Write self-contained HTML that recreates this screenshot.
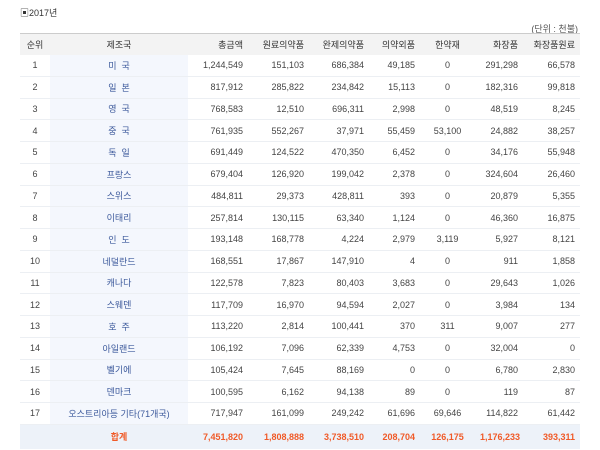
<!DOCTYPE html>
<html><head><meta charset="utf-8"><style>
body{margin:0;background:#fff;font-family:"Liberation Sans","Noto Sans CJK KR",sans-serif;font-size:9px;color:#444;}
.t{position:absolute;left:20px;top:6px;font-size:9px;color:#333}
.u{position:absolute;right:22px;top:22px;font-size:9px;color:#555}
table{position:absolute;left:20px;top:33px;width:560px;border-collapse:collapse;table-layout:fixed}
th{background:#f3f3f3;height:21px;font-weight:normal;color:#333;border-top:1px solid #ccc;text-align:right;padding:0 5px}
td{height:20.75px;text-align:right;padding:0 5px;border-bottom:1px solid #eceff3}
th:nth-child(1),td:nth-child(1),th:nth-child(2),td:nth-child(2),th:nth-child(7),td:nth-child(7){text-align:center}
td:nth-child(2){background:#f4f7fd;color:#3d5a9c}
tr.s td{background:#edf2f9;color:#f05a28;font-weight:bold;height:24px;border:none}
</style></head><body>
<div class="t">▣2017년</div>
<div class="u">(단위 : 천불)</div>
<table>
<colgroup><col style="width:30px"><col style="width:138px"><col style="width:60px"><col style="width:61px"><col style="width:60px"><col style="width:51px"><col style="width:55px"><col style="width:48px"><col style="width:57px"></colgroup>
<tr><th>순위</th><th>제조국</th><th>총금액</th><th>원료의약품</th><th>완제의약품</th><th>의약외품</th><th>한약재</th><th>화장품</th><th>화장품원료</th></tr>
<tr><td>1</td><td>미&nbsp;&nbsp;국</td><td>1,244,549</td><td>151,103</td><td>686,384</td><td>49,185</td><td>0</td><td>291,298</td><td>66,578</td></tr>
<tr><td>2</td><td>일&nbsp;&nbsp;본</td><td>817,912</td><td>285,822</td><td>234,842</td><td>15,113</td><td>0</td><td>182,316</td><td>99,818</td></tr>
<tr><td>3</td><td>영&nbsp;&nbsp;국</td><td>768,583</td><td>12,510</td><td>696,311</td><td>2,998</td><td>0</td><td>48,519</td><td>8,245</td></tr>
<tr><td>4</td><td>중&nbsp;&nbsp;국</td><td>761,935</td><td>552,267</td><td>37,971</td><td>55,459</td><td>53,100</td><td>24,882</td><td>38,257</td></tr>
<tr><td>5</td><td>독&nbsp;&nbsp;일</td><td>691,449</td><td>124,522</td><td>470,350</td><td>6,452</td><td>0</td><td>34,176</td><td>55,948</td></tr>
<tr><td>6</td><td>프랑스</td><td>679,404</td><td>126,920</td><td>199,042</td><td>2,378</td><td>0</td><td>324,604</td><td>26,460</td></tr>
<tr><td>7</td><td>스위스</td><td>484,811</td><td>29,373</td><td>428,811</td><td>393</td><td>0</td><td>20,879</td><td>5,355</td></tr>
<tr><td>8</td><td>이태리</td><td>257,814</td><td>130,115</td><td>63,340</td><td>1,124</td><td>0</td><td>46,360</td><td>16,875</td></tr>
<tr><td>9</td><td>인&nbsp;&nbsp;도</td><td>193,148</td><td>168,778</td><td>4,224</td><td>2,979</td><td>3,119</td><td>5,927</td><td>8,121</td></tr>
<tr><td>10</td><td>네덜란드</td><td>168,551</td><td>17,867</td><td>147,910</td><td>4</td><td>0</td><td>911</td><td>1,858</td></tr>
<tr><td>11</td><td>캐나다</td><td>122,578</td><td>7,823</td><td>80,403</td><td>3,683</td><td>0</td><td>29,643</td><td>1,026</td></tr>
<tr><td>12</td><td>스웨덴</td><td>117,709</td><td>16,970</td><td>94,594</td><td>2,027</td><td>0</td><td>3,984</td><td>134</td></tr>
<tr><td>13</td><td>호&nbsp;&nbsp;주</td><td>113,220</td><td>2,814</td><td>100,441</td><td>370</td><td>311</td><td>9,007</td><td>277</td></tr>
<tr><td>14</td><td>아일랜드</td><td>106,192</td><td>7,096</td><td>62,339</td><td>4,753</td><td>0</td><td>32,004</td><td>0</td></tr>
<tr><td>15</td><td>벨기에</td><td>105,424</td><td>7,645</td><td>88,169</td><td>0</td><td>0</td><td>6,780</td><td>2,830</td></tr>
<tr><td>16</td><td>덴마크</td><td>100,595</td><td>6,162</td><td>94,138</td><td>89</td><td>0</td><td>119</td><td>87</td></tr>
<tr><td>17</td><td>오스트리아등 기타(71개국)</td><td>717,947</td><td>161,099</td><td>249,242</td><td>61,696</td><td>69,646</td><td>114,822</td><td>61,442</td></tr>
<tr class="s"><td></td><td>합계</td><td>7,451,820</td><td>1,808,888</td><td>3,738,510</td><td>208,704</td><td>126,175</td><td>1,176,233</td><td>393,311</td></tr>
</table>
</body></html>
